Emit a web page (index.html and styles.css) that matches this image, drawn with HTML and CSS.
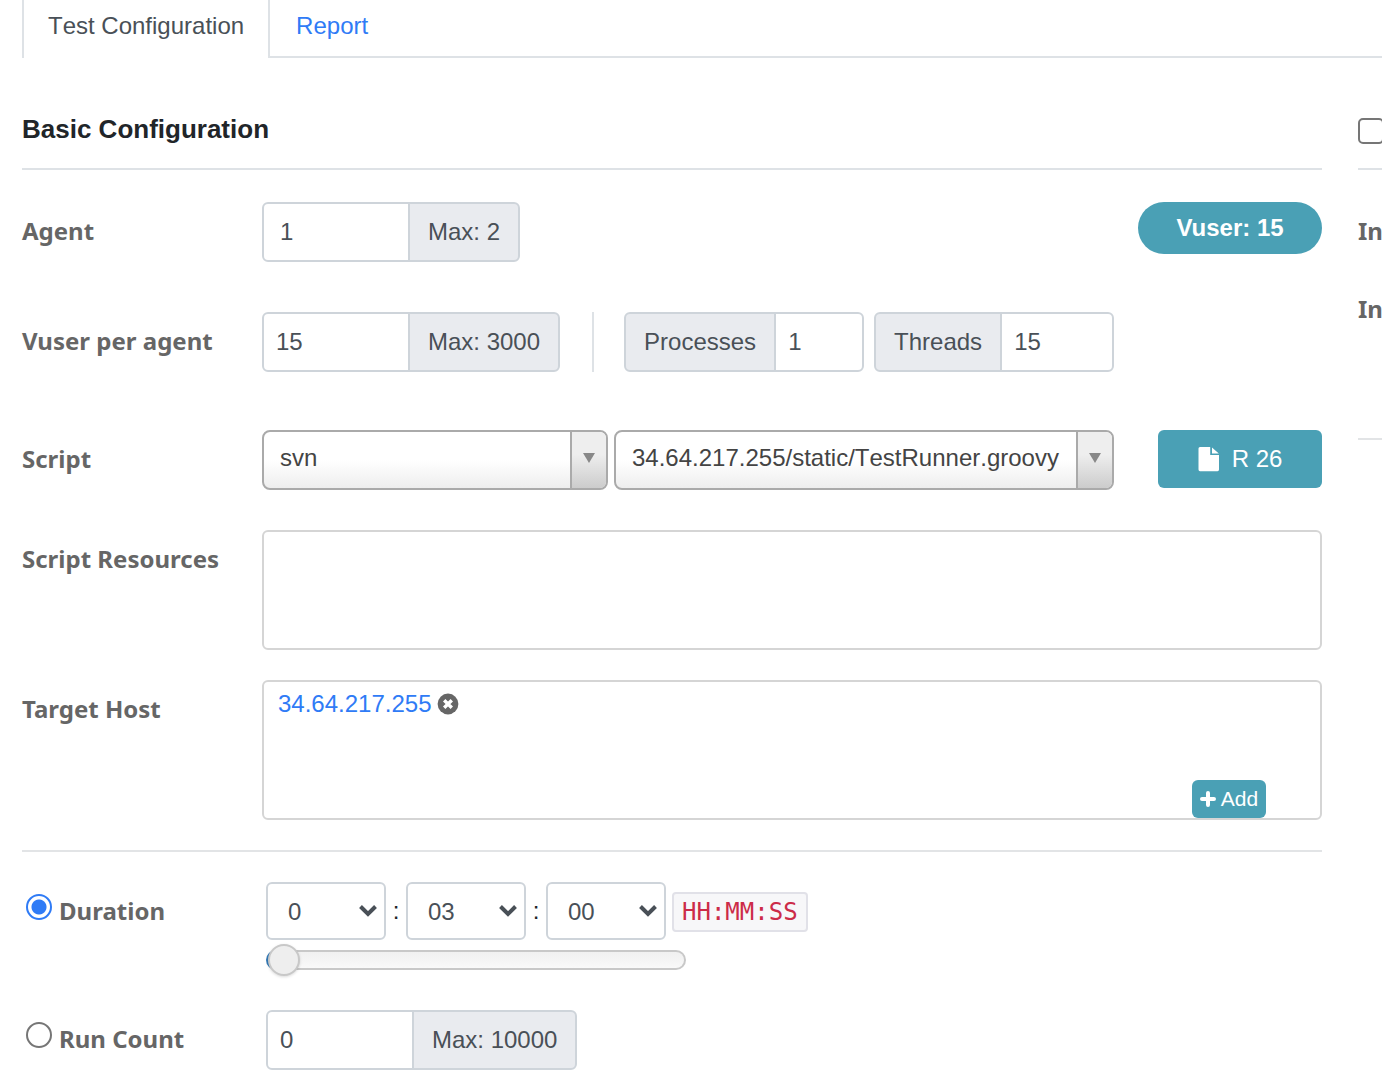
FILE: index.html
```html
<!DOCTYPE html>
<html lang="en">
<head>
<meta charset="UTF-8">
<meta name="viewport" content="width=device-width, initial-scale=1">
<title>Test Configuration</title>
<link rel="stylesheet" href="styles.css">
</head>
<body>

<nav class="tabs">
  <a href="#config" class="tab active">Test Configuration</a>
  <a href="#report" class="tab">Report</a>
</nav>

<form class="columns" id="config">
  <section class="basic">
    <header class="section-header"><h1>Basic Configuration</h1></header>

    <div class="row agent-row">
      <label class="row-label" for="agentCount">Agent</label>
      <div class="controls">
        <div class="input-group">
          <input type="text" id="agentCount" class="count" value="1">
          <span class="addon">Max: 2</span>
        </div>
        <span class="badge">Vuser: 15</span>
      </div>
    </div>

    <div class="row vuser-row">
      <label class="row-label" for="vuserPerAgent">Vuser per agent</label>
      <div class="controls">
        <div class="input-group">
          <input type="text" id="vuserPerAgent" class="count" value="15">
          <span class="addon">Max: 3000</span>
        </div>
        <div class="divider"></div>
        <div class="input-group processes">
          <label class="addon" for="processes">Processes</label>
          <input type="text" id="processes" value="1">
        </div>
        <div class="input-group threads">
          <label class="addon" for="threads">Threads</label>
          <input type="text" id="threads" value="15">
        </div>
      </div>
    </div>

    <div class="row script-row">
      <label class="row-label" for="scriptName">Script</label>
      <div class="controls">
        <div class="picker scm">
          <select aria-label="SCM"><option>svn</option></select>
          <span class="picker-arrow"><svg width="12" height="10" viewBox="0 0 12 10"><path d="M0 0h12L6 10z" fill="#888"/></svg></span>
        </div>
        <div class="picker script">
          <select id="scriptName"><option>34.64.217.255/static/TestRunner.groovy</option></select>
          <span class="picker-arrow"><svg width="12" height="10" viewBox="0 0 12 10"><path d="M0 0h12L6 10z" fill="#888"/></svg></span>
        </div>
        <button type="button" class="btn revision">
          <svg width="22" height="26" viewBox="0 0 22 26"><path d="M2 1H12.200V9H21V23.500Q21 25.200 19.500 25.200H2Q0.500 25.200 0.500 23.500V2.500Q0.500 1 2 1zM14 1.500L20.800 7.500H14z" fill="#fff"/></svg>
          R 26
        </button>
      </div>
    </div>

    <div class="row resources-row">
      <span class="row-label">Script Resources</span>
      <div class="box resources"></div>
    </div>

    <div class="row host-row">
      <span class="row-label">Target Host</span>
      <div class="box hosts">
        <p class="host">
          <a href="#host">34.64.217.255</a>
          <button type="button" class="remove" aria-label="Remove host">
            <svg width="22" height="22" viewBox="0 0 22 22"><circle cx="11" cy="11" r="10.400" fill="#666"/><path d="M7.200 7.200l7.600 7.600M14.800 7.200l-7.600 7.600" stroke="#fff" stroke-width="3.400"/></svg>
          </button>
        </p>
        <button type="button" class="btn add">
          <svg width="16" height="16" viewBox="0 0 16 16"><path d="M8 2v12M2 8h12" stroke="#fff" stroke-width="4" stroke-linecap="round"/></svg>
          Add
        </button>
      </div>
    </div>

    <hr>

    <div class="row duration-row">
      <div class="row-label">
        <input type="radio" name="threshold" id="duration" checked>
        <label for="duration">Duration</label>
      </div>
      <div>
        <div class="time">
          <div class="time-select">
            <select aria-label="Hours"><option>0</option></select>
            <svg width="18" height="12" viewBox="0 0 18 12"><path d="M1.500 1.500L9 9l7.500-7.500" fill="none" stroke="#495057" stroke-width="4"/></svg>
          </div>
          <span class="colon">:</span>
          <div class="time-select">
            <select aria-label="Minutes"><option>03</option></select>
            <svg width="18" height="12" viewBox="0 0 18 12"><path d="M1.500 1.500L9 9l7.500-7.500" fill="none" stroke="#495057" stroke-width="4"/></svg>
          </div>
          <span class="colon">:</span>
          <div class="time-select">
            <select aria-label="Seconds"><option>00</option></select>
            <svg width="18" height="12" viewBox="0 0 18 12"><path d="M1.500 1.500L9 9l7.500-7.500" fill="none" stroke="#495057" stroke-width="4"/></svg>
          </div>
          <code>HH:MM:SS</code>
        </div>
        <input type="range" class="slider" min="0" max="100" value="0" aria-label="Duration">
      </div>
    </div>

    <div class="row run-row">
      <div class="row-label">
        <input type="radio" name="threshold" id="runCount">
        <label for="runCount">Run Count</label>
      </div>
      <div class="input-group">
        <input type="text" class="count" value="0" aria-label="Run Count">
        <span class="addon">Max: 10000</span>
      </div>
    </div>
  </section>

  <section class="side">
    <header class="section-header"><input type="checkbox" class="check" aria-label="Enable"></header>
    <span class="row-label">In</span>
    <span class="row-label">In</span>
    <hr>
  </section>
</form>

</body>
</html>
```

FILE: styles.css
```css
* {
  box-sizing: border-box;
}
body {
  margin: 0;
  background: #fff;
  color: #212529;
  font-family: "Liberation Sans", Arial, sans-serif;
  font-size: 24px;
}
input, select, button {
  font: inherit;
  margin: 0;
}
a {
  color: #2f7bf6;
  text-decoration: none;
}
svg {
  display: block;
  flex: none;
}
hr {
  margin: 0;
  border: 0;
  border-top: 2px solid #e2e4e6;
}

/* tabs */
.tabs {
  display: flex;
  height: 58px;
  margin-left: 22px;
  box-shadow: inset 0 -2px #dee2e6;
  font-kerning: none;
}
.tab {
  padding: 0 24px;
  border: 2px solid transparent;
  border-width: 0 2px;
  line-height: 52px;
}
.tab.active {
  background: #fff;
  border-color: #dee2e6;
  color: #495057;
}

.columns {
  display: grid;
  grid-template-columns: minmax(0, 1fr) 24px;
  gap: 36px;
  padding: 40px 0 0 22px;
}
.section-header {
  display: flex;
  height: 72px;
  margin-bottom: 32px;
  border-bottom: 2px solid #dee2e6;
}
h1 {
  margin: 0;
  font-size: 26px;
  line-height: 62px;
}

/* rows */
.row {
  display: grid;
  grid-template-columns: 240px minmax(0, 1fr);
}
.row-label {
  color: #666;
  font-family: "Noto Sans", Tahoma, sans-serif;
  font-weight: 700;
  line-height: 58px;
}
.controls {
  display: flex;
  align-items: flex-start;
}
.agent-row { margin-bottom: 50px; }
.vuser-row { margin-bottom: 58px; }
.script-row { margin-bottom: 40px; }
.resources-row, .host-row { margin-bottom: 30px; }

.input-group {
  display: flex;
  height: 60px;
}
.input-group input, .addon {
  border: 2px solid #ced4da;
  color: #495057;
}
.input-group input {
  flex: 1;
  min-width: 0;
  padding: 0 12px;
  background: #fff;
}
.input-group .count {
  flex: none;
  width: 148px;
}
.agent-row .count {
  padding: 0 16px;
}
.addon {
  padding: 0 18px;
  background: #e9ebef;
  line-height: 56px;
  white-space: nowrap;
}
.input-group > :first-child {
  border-radius: 6px 0 0 6px;
}
.input-group > :last-child {
  margin-left: -2px;
  border-radius: 0 6px 6px 0;
}
.processes {
  width: 240px;
}
.threads {
  width: 240px;
  margin-left: 10px;
}
.divider {
  width: 2px;
  height: 60px;
  margin: 0 30px 0 32px;
  background: #dee2e6;
}
.badge {
  width: 184px;
  margin-left: auto;
  border-radius: 26px;
  background: #4aa0b5;
  color: #fff;
  font-weight: 700;
  line-height: 52px;
  text-align: center;
}
.btn {
  display: flex;
  align-items: center;
  justify-content: center;
  border: 0;
  border-radius: 6px;
  background: #4aa0b5;
  color: #fff;
}

/* script pickers */
.picker {
  position: relative;
  height: 60px;
  font-kerning: none;
}
.scm { width: 346px; margin-right: 6px; }
.script { width: 500px; }
.picker select {
  width: 100%;
  height: 100%;
  padding: 0 38px 5px 16px;
  appearance: none;
  border: 2px solid #aaa;
  border-radius: 8px;
  background: linear-gradient(to top, #eee 0%, #fff 50%);
  color: #444;
  font-kerning: none;
}
.picker-arrow {
  position: absolute;
  top: 2px;
  right: 2px;
  bottom: 2px;
  display: flex;
  align-items: center;
  justify-content: center;
  width: 36px;
  padding-bottom: 4px;
  border-left: 2px solid #aaa;
  border-radius: 0 6px 6px 0;
  background: linear-gradient(to top, #ccc 0%, #eee 60%);
  pointer-events: none;
}
.revision {
  width: 164px;
  height: 58px;
  margin-left: auto;
  gap: 12px;
}

.box {
  position: relative;
  border: 2px solid #d5d5d5;
  border-radius: 6px;
}
.resources { height: 120px; }
.hosts { height: 140px; }
.host {
  display: flex;
  align-items: center;
  gap: 6px;
  margin: 0;
  padding: 0 14px;
  line-height: 44px;
}
.remove {
  padding: 0;
  border: 0;
  background: none;
}
.add {
  position: absolute;
  right: 54px;
  bottom: 0;
  width: 74px;
  height: 38px;
  padding: 0;
  gap: 5px;
  font-size: 21px;
}

/* duration and run count */
.duration-row, .run-row {
  grid-template-columns: 244px minmax(0, 1fr);
}
.duration-row { margin: 30px 0 40px; }
.duration-row .row-label, .run-row .row-label {
  display: flex;
  align-items: flex-start;
  gap: 7px;
  padding-left: 4px;
}
input[type="radio"] {
  width: 26px;
  height: 26px;
  margin-top: 12px;
  appearance: none;
  border: 2px solid #767676;
  border-radius: 50%;
}
input[type="radio"]:checked {
  border-color: #2f7bf6;
  background: radial-gradient(circle, #2f7bf6 7px, #fff 8px);
}
.time {
  display: flex;
  align-items: center;
  height: 58px;
}
.time-select {
  position: relative;
  width: 120px;
  height: 58px;
}
.time-select select {
  width: 100%;
  height: 100%;
  padding: 0 36px 0 20px;
  appearance: none;
  border: 2px solid #ced4da;
  border-radius: 6px;
  background: #fff;
  color: #495057;
}
.time-select svg {
  position: absolute;
  top: 23px;
  right: 9px;
  pointer-events: none;
}
.colon {
  width: 20px;
  text-align: center;
}
code {
  margin: 2px 0 0 6px;
  padding: 0 8px;
  border: 2px solid #e1e1e8;
  border-radius: 4px;
  background: #f7f7f9;
  color: #cc2b48;
  font-family: "DejaVu Sans Mono", monospace;
  font-size: 24px;
  line-height: 36px;
}
.slider {
  display: block;
  width: 420px;
  height: 20px;
  margin-top: 10px;
  appearance: none;
  border: 2px solid transparent;
  border-radius: 10px;
  background:
    linear-gradient(#337ab7, #337ab7) 0 0 / 8px 100% no-repeat border-box,
    linear-gradient(#f0f0f0, #f9f9f9) padding-box,
    linear-gradient(#c8c8c8, #c8c8c8) border-box;
}
.slider::-webkit-slider-thumb {
  width: 32px;
  height: 32px;
  appearance: none;
  border: 2px solid #c8c8c8;
  border-radius: 50%;
  background: #eee;
  box-shadow: 0 1px 3px rgba(0, 0, 0, 0.15);
}

.side {
  overflow: hidden;
}
.side .row-label {
  display: block;
  margin-bottom: 20px;
}
.side hr {
  margin-top: 100px;
}
.check {
  flex: none;
  width: 26px;
  height: 26px;
  margin-top: 20px;
  appearance: none;
  border: 2px solid #767676;
  border-radius: 5px;
}
```
